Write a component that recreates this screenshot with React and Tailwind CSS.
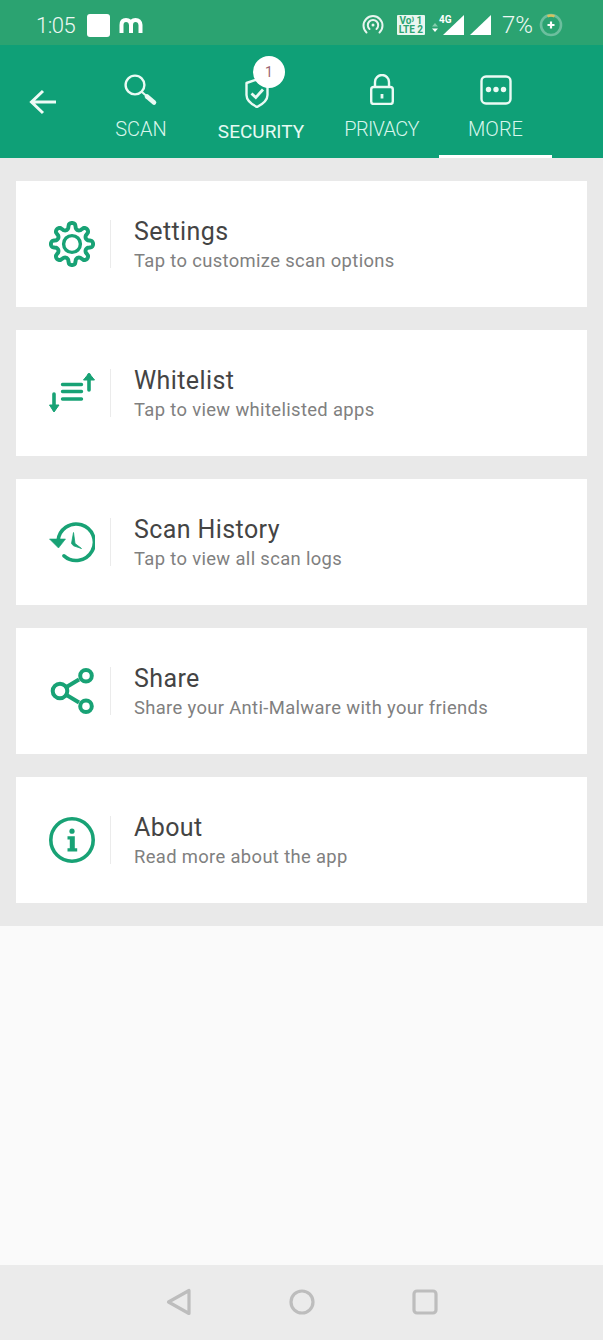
import React from "react";

const GREEN = "#18a275";

// gear outline with 8 rounded teeth
const gearPath = () => {
  const pts = [];
  for (let i = 0; i < 160; i++) {
    const a = (i / 160) * Math.PI * 2;
    const w = Math.cos(8 * a);
    const r = 18 + 3.1 * Math.sign(w) * Math.pow(Math.abs(w), 0.45);
    pts.push(`${(23 + r * Math.sin(a)).toFixed(2)} ${(23 - r * Math.cos(a)).toFixed(2)}`);
  }
  return `M${pts.join("L")}Z`;
};

const GearIcon = () => (
  <svg width="46" height="46" viewBox="0 0 46 46" fill="none" stroke={GREEN} strokeWidth="3.9" strokeLinejoin="round">
    <path d={gearPath()} />
    <circle cx="23" cy="23" r="8.4" strokeWidth="3.4" />
  </svg>
);

const ListIcon = () => (
  <svg width="46" height="46" viewBox="0 0 46 46" fill="none" stroke={GREEN} strokeWidth="3.4">
    <path d="M13.5 14.5h19M13.5 21.5h19M13.5 29h19" strokeLinecap="round" />
    <path d="M40 20V5" strokeWidth="3.6" strokeLinecap="round" />
    <path d="M34.5 10L40 3.2 45.5 10Z" fill={GREEN} strokeWidth="1" strokeLinejoin="round" />
    <path d="M5 24v15" strokeWidth="3.6" strokeLinecap="round" />
    <path d="M0.5 35L5 42 10 35Z" fill={GREEN} strokeWidth="1" strokeLinejoin="round" />
  </svg>
);

const HistoryIcon = () => (
  <svg width="46" height="46" viewBox="0 0 46 46" fill="none" stroke={GREEN} strokeWidth="3.6">
    <path d="M9 22A18.2 18.2 0 1 1 15 36.8" strokeLinecap="round" />
    <path d="M0.5 20H16.5L9.5 29Z" fill={GREEN} strokeWidth="0.6" strokeLinejoin="round" />
    <path d="M24.5 13.5L26 24.5 32.5 29.5 24.5 26.8 22.5 24.5Z" fill={GREEN} strokeWidth="0.8" strokeLinejoin="round" />
  </svg>
);

const ShareIcon = () => (
  <svg width="46" height="46" viewBox="0 0 46 46" fill="none" stroke={GREEN} strokeWidth="4">
    <circle cx="11" cy="23" r="7.3" />
    <circle cx="37" cy="7.8" r="5.8" />
    <circle cx="37" cy="38.2" r="5.8" />
    <path d="M17.5 19L30 11.5M17.5 27L30 34.5" />
  </svg>
);

const InfoIcon = () => (
  <svg width="46" height="46" viewBox="0 0 46 46" fill="none">
    <circle cx="23" cy="23" r="21.2" stroke={GREEN} strokeWidth="3.6" />
    <circle cx="23" cy="14.2" r="2.6" fill={GREEN} />
    <path d="M18.5 19.2H25.8V31.2H28.2V34.6H18.5V31.2H20.8V22.4H18.5Z" fill={GREEN} />
  </svg>
);

const rows = [
  { icon: <GearIcon />, title: "Settings", sub: "Tap to customize scan options" },
  { icon: <ListIcon />, title: "Whitelist", sub: "Tap to view whitelisted apps" },
  { icon: <HistoryIcon />, title: "Scan History", sub: "Tap to view all scan logs" },
  { icon: <ShareIcon />, title: "Share", sub: "Share your Anti-Malware with your friends" },
  { icon: <InfoIcon />, title: "About", sub: "Read more about the app" },
];

const Row = ({ icon, title, sub }) => (
  <div className="flex h-[125.5px] items-center bg-white">
    <div className="flex w-[94px] shrink-0 pl-[33px]">{icon}</div>
    <div className="h-[48px] w-px shrink-0 bg-[#ebebeb]" />
    <div className="flex flex-col pl-[23px] pt-[3px]">
      <span className="text-[25px] leading-[30px] tracking-[0.4px] text-[#444444]">{title}</span>
      <span className="text-[18.4px] leading-[27px] tracking-[0.35px] text-[#808080]">{sub}</span>
    </div>
  </div>
);

const StatusBar = () => (
  <div className="flex h-[45px] items-center bg-[#2ba371] pl-[36px] pr-[40px] pt-[5px] text-white">
    <span className="w-[51px] text-[22px] font-light tracking-[-0.5px] text-[#eef8f3]">1:05</span>
    <div className="h-[23px] w-[23px] rounded-[3px] bg-white" />
    <svg className="ml-[9px]" width="24" height="16" viewBox="0 0 24 16" fill="none" stroke="#fff" strokeWidth="4">
      <path d="M2.5 16V8Q2.5 3 7 3T12 8V16M12 8Q12 3 16.5 3T21.5 8V16" />
    </svg>
    <div className="flex-1" />
    <svg width="22" height="20" viewBox="0 0 22 20" fill="none" stroke="#e8f5ef" strokeWidth="2" strokeLinecap="round">
      <path d="M4.5 17.5A9.5 9.5 0 1 1 17.5 17.5" />
      <path d="M7.5 14A5.2 5.2 0 1 1 14.5 14" />
      <circle cx="11" cy="10" r="1.5" fill="#e8f5ef" stroke="none" />
    </svg>
    <div className="ml-[13px] flex h-[20px] w-[28px] flex-col items-center justify-center rounded-[1px] bg-[#e9f6f0] text-[10px] font-bold leading-[9.5px] text-[#2ba371]">
      <span>Vo⁾ 1</span>
      <span>LTE 2</span>
    </div>
    <div className="relative ml-[7px] h-[22px] w-[32px]">
      <svg className="absolute left-0 top-0" width="32" height="22" viewBox="0 0 32 22">
        <path d="M32 1V21H11Z" fill="#fff" />
        <path d="M0 12.5L3 9 6 12.5Z" fill="#85cdae" />
        <path d="M0 14.5L3 18 6 14.5Z" fill="#fff" />
      </svg>
      <span className="absolute left-[7px] top-[0px] text-[10px] font-bold leading-[12px] text-white">4G</span>
    </div>
    <svg className="ml-[5px]" width="22" height="22" viewBox="0 0 22 22">
      <path d="M22 1V21H1Z" fill="#fff" />
    </svg>
    <span className="ml-[11px] text-[24px] font-light leading-none text-[#eef8f3]">7%</span>
    <svg className="ml-[6px]" width="24" height="24" viewBox="0 0 24 24" fill="none">
      <circle cx="12" cy="12" r="10" stroke="#6cbf9e" strokeWidth="2.6" />
      <path d="M8.5 3.2A10 10 0 0 1 15.5 3.2" stroke="#d6c25e" strokeWidth="2.6" />
      <path d="M12 8.5v7M8.5 12h7" stroke="#fff" strokeWidth="2.2" />
    </svg>
  </div>
);

const tabIcons = {
  scan: (
    <svg width="34" height="33" viewBox="0 0 34 33" fill="none" stroke="#eafaf4">
      <circle cx="11" cy="11" r="9.4" strokeWidth="2.4" />
      <path d="M18 18L23 22.5" strokeWidth="2" />
      <path d="M23 22.5L30 28.5" strokeWidth="4.6" strokeLinecap="round" />
    </svg>
  ),
  security: (
    <svg className="mt-[4px]" width="24" height="30" viewBox="0 0 24 30" fill="none">
      <path d="M12 1.5L22.5 5V17C22.5 23 17 26.5 12 29 7 26.5 1.5 23 1.5 17V5Z" stroke="#eafaf4" strokeWidth="2.4" strokeLinejoin="round" />
      <path d="M6.5 15.5L10.8 19.5 18 11.5" stroke="#eafaf4" strokeWidth="2.8" />
    </svg>
  ),
  privacy: (
    <svg width="24" height="31" viewBox="0 0 24 31" fill="none" stroke="#eafaf4" strokeWidth="2.4">
      <rect x="1.2" y="13" width="21.6" height="17" rx="2.5" />
      <path d="M5 13V8A7 7 0 0 1 19 8V13" />
      <path d="M12 20v4.5" strokeWidth="2.8" />
    </svg>
  ),
  more: (
    <svg className="mt-[1px]" width="32" height="30" viewBox="0 0 32 30" fill="none">
      <rect x="1.5" y="1.5" width="29" height="27" rx="4.5" stroke="#eafaf4" strokeWidth="2.4" />
      <circle cx="8.5" cy="14.5" r="2.7" fill="#eafaf4" />
      <circle cx="16" cy="14.5" r="2.7" fill="#eafaf4" />
      <circle cx="23.5" cy="14.5" r="2.7" fill="#eafaf4" />
    </svg>
  ),
};

const Tab = ({ icon, label, className, labelClass = "mt-[9px] font-light text-[20px]", active }) => (
  <div className={`flex h-full flex-col items-center pt-[29px] ${active ? "border-b-[3px] border-white" : ""} ${className}`}>
    <div className="flex h-[34px] items-start justify-center">{icon}</div>
    <span className={`leading-[24px] text-[#d8f6ec] ${labelClass}`}>{label}</span>
  </div>
);

const Header = () => (
  <div className="flex h-[113px] items-stretch bg-[#0fa077]">
    <div className="flex w-[84px] shrink-0 items-center pl-[29px]">
      <svg width="28" height="26" viewBox="0 0 28 26" fill="none" stroke="#eefbf6" strokeWidth="3">
        <path d="M27 13H3M14 2L2.5 13 14 24" />
      </svg>
    </div>
    <Tab icon={tabIcons.scan} label="SCAN" className="w-[114px]" />
    <div className="relative w-[126px]">
      <Tab
        icon={tabIcons.security}
        label="SECURITY"
        className="w-full pr-[8px]"
        labelClass="mt-[12px] ml-[8px] text-[19px] text-[#e6faf3]"
      />
      <div className="absolute left-[55px] top-[11px] flex h-[32px] w-[32px] items-center justify-center rounded-full bg-white text-[14px] text-[#9c6670]">
        1
      </div>
    </div>
    <Tab
      icon={tabIcons.privacy}
      label="PRIVACY"
      className="w-[115px]"
      labelClass="mt-[9px] font-light text-[20px] tracking-[-0.7px]"
    />
    <Tab icon={tabIcons.more} label="MORE" className="w-[113px]" active />
  </div>
);

const NavBar = () => (
  <div className="flex h-[75px] items-center justify-center gap-[97px] bg-[#ebebeb] pb-[2px]">
    <svg width="26" height="28" viewBox="0 0 26 28" fill="none" stroke="#bdbdbd" strokeWidth="3.2" strokeLinejoin="round">
      <path d="M23 2.5V25.5L2.5 14Z" />
    </svg>
    <svg width="26" height="26" viewBox="0 0 26 26" fill="none" stroke="#bdbdbd" strokeWidth="3.2">
      <circle cx="13" cy="13" r="11" />
    </svg>
    <svg width="26" height="26" viewBox="0 0 26 26" fill="none" stroke="#bdbdbd" strokeWidth="3.2">
      <rect x="2" y="2" width="22" height="22" rx="3" />
    </svg>
  </div>
);

export default function App() {
  return (
    <div className="flex h-[1340px] w-[603px] flex-col overflow-hidden bg-[#fafafa] font-['Roboto',sans-serif]">
      <StatusBar />
      <Header />
      <div className="flex flex-col gap-[23.5px] bg-[#e9e9e9] px-[16px] py-[23px]">
        {rows.map((r) => (
          <Row key={r.title} {...r} />
        ))}
      </div>
      <div className="flex-1" />
      <NavBar />
    </div>
  );
}
